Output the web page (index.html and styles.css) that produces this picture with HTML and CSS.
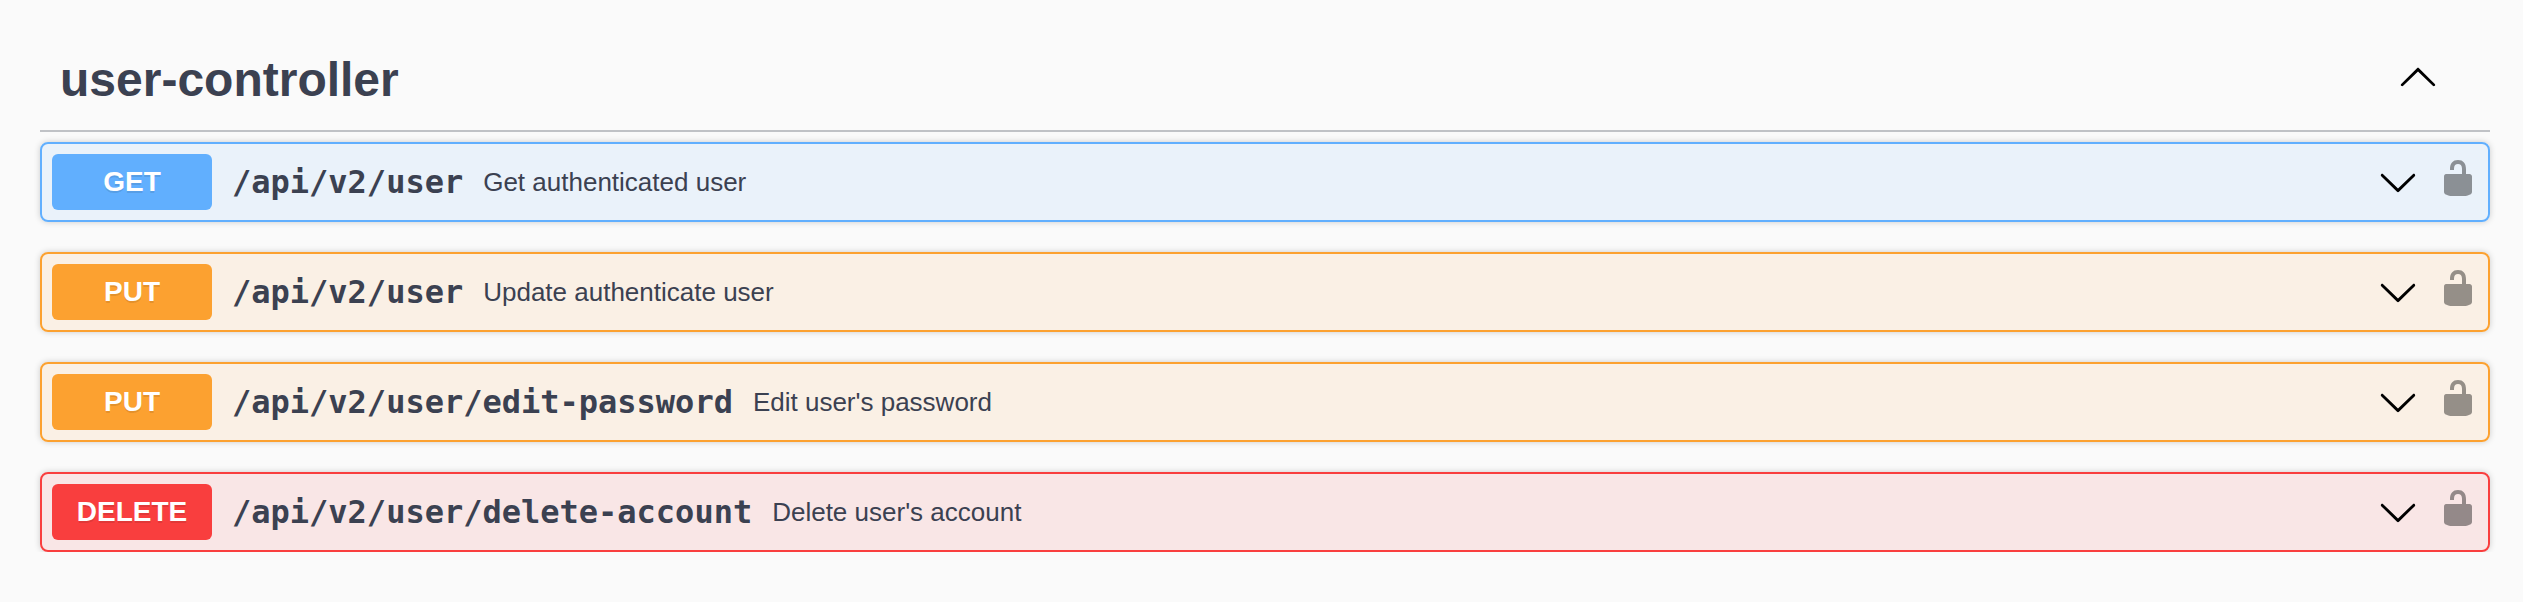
FILE: index.html
```html
<!DOCTYPE html>
<html lang="en">
<head>
<meta charset="utf-8">
<title>user-controller</title>
<link rel="stylesheet" href="styles.css">
</head>
<body>
<svg class="defs" aria-hidden="true">
  <symbol id="arrow-up" viewBox="0 0 20 20"><path d="M 17.418 14.908 C 17.69 15.176 18.127 15.176 18.397 14.908 C 18.667 14.64 18.668 14.207 18.397 13.939 L 10.489 6.109 C 10.219 5.841 9.782 5.841 9.51 6.109 L 1.602 13.939 C 1.332 14.207 1.332 14.64 1.602 14.908 C 1.873 15.176 2.311 15.176 2.581 14.908 L 10 7.767 L 17.418 14.908 Z"/></symbol>
  <symbol id="arrow-down" viewBox="0 0 20 20"><path d="M17.418 6.109c.272-.268.709-.268.979 0s.271.701 0 .969l-7.908 7.83c-.27.268-.707.268-.979 0l-7.908-7.83c-.27-.268-.27-.701 0-.969.271-.268.709-.268.979 0L10 13.25l7.418-7.141z"/></symbol>
  <symbol id="unlocked" viewBox="0 0 20 20"><path d="M15.8 8H14V5.6C14 2.703 12.665 1 10 1 7.334 1 6 2.703 6 5.6V6h2v-.801C8 3.754 8.797 3 10 3c1.203 0 2 .754 2 2.199V8H4c-.553 0-1 .646-1 1.199V17c0 .549.428 1.139.951 1.307l1.197.387C5.672 18.861 6.55 19 7.1 19h5.8c.549 0 1.428-.139 1.951-.307l1.196-.387c.524-.167.953-.757.953-1.306V9.199C17 8.646 16.352 8 15.8 8z"/></symbol>
</svg>
<main class="section">
  <header class="tag">
    <h3 class="tag-name">user-controller</h3>
    <svg class="icon"><use href="#arrow-up"/></svg>
  </header>
  <div class="operations">
    <div class="op get">
      <span class="method">GET</span>
      <span class="path">/api/v2/user</span>
      <span class="description">Get authenticated user</span>
      <svg class="icon"><use href="#arrow-down"/></svg>
      <svg class="icon lock"><use href="#unlocked"/></svg>
    </div>
    <div class="op put">
      <span class="method">PUT</span>
      <span class="path">/api/v2/user</span>
      <span class="description">Update authenticate user</span>
      <svg class="icon"><use href="#arrow-down"/></svg>
      <svg class="icon lock"><use href="#unlocked"/></svg>
    </div>
    <div class="op put">
      <span class="method">PUT</span>
      <span class="path">/api/v2/user/edit-password</span>
      <span class="description">Edit user's password</span>
      <svg class="icon"><use href="#arrow-down"/></svg>
      <svg class="icon lock"><use href="#unlocked"/></svg>
    </div>
    <div class="op delete">
      <span class="method">DELETE</span>
      <span class="path">/api/v2/user/delete-account</span>
      <span class="description">Delete user's account</span>
      <svg class="icon"><use href="#arrow-down"/></svg>
      <svg class="icon lock"><use href="#unlocked"/></svg>
    </div>
  </div>
</main>
</body>
</html>
```

FILE: styles.css
```css
* {
  box-sizing: border-box;
}

body {
  margin: 0;
  background: #fafafa;
  color: #3b4151;
  font-family: "Liberation Sans", Arial, sans-serif;
}

.defs {
  display: none;
}

.section {
  padding: 26px 33px 0 40px;
}

.tag {
  display: flex;
  align-items: center;
  justify-content: space-between;
  height: 106px;
  padding: 0 52px 4px 20px;
  border-bottom: 2px solid rgba(59, 65, 81, 0.3);
}

.tag-name {
  margin: 0;
  padding-top: 8px;
  font-size: 48px;
  line-height: 56px;
}

.icon {
  flex: none;
  width: 40px;
  height: 40px;
}

.operations {
  display: flex;
  flex-direction: column;
  gap: 30px;
  padding-top: 10px;
}

.op {
  display: flex;
  align-items: center;
  height: 80px;
  padding: 0 10px;
  border: 2px solid;
  border-radius: 8px;
  box-shadow: 0 0 6px rgba(0, 0, 0, 0.19);
}

.method {
  width: 160px;
  height: 56px;
  border-radius: 6px;
  color: #fff;
  font-size: 28px;
  font-weight: 700;
  line-height: 56px;
  text-align: center;
  text-shadow: 0 2px 0 rgba(0, 0, 0, 0.1);
}

.path {
  padding: 0 20px;
  font-family: "DejaVu Sans Mono", monospace;
  font-size: 32px;
  font-weight: 700;
}

.description {
  flex: 1;
  font-size: 26px;
}

.lock {
  margin: -8px 0 0 20px;
  opacity: 0.4;
}

.get {
  border-color: #61affe;
  background: rgba(97, 175, 254, 0.1);
}

.get .method {
  background: #61affe;
}

.put {
  border-color: #fca130;
  background: rgba(252, 161, 48, 0.1);
}

.put .method {
  background: #fca130;
}

.delete {
  border-color: #f93e3e;
  background: rgba(249, 62, 62, 0.1);
}

.delete .method {
  background: #f93e3e;
}
```
